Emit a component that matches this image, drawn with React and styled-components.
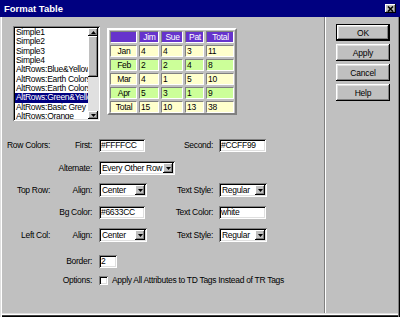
import React from "react";
import styled, { createGlobalStyle } from "styled-components";

const FONT = `"Liberation Sans", Arial, sans-serif`;

const Global = createGlobalStyle`
  html, body { margin: 0; padding: 0; background: #c0c0c0; }
  body { width: 400px; height: 317px; overflow: hidden; }
  * { box-sizing: border-box; }
`;

const Window = styled.div`
  width: 400px;
  height: 317px;
  background: #c0c0c0;
  display: flex;
  flex-direction: column;
  font: 8.5px ${FONT};
  letter-spacing: -0.3px;
  color: #000;
`;

const TitleBar = styled.div`
  flex: none;
  height: 17px;
  background: #000080;
  display: flex;
  align-items: center;
  justify-content: space-between;
  padding: 0 4px;
`;

const Title = styled.span`
  color: #fff;
  font: bold 9.5px ${FONT};
  letter-spacing: 0;
`;

const CloseBtn = styled.div`
  width: 11px;
  height: 9px;
  background: #c0c0c0;
  display: flex;
  align-items: center;
  justify-content: center;
  box-shadow: inset -1px -1px #000, inset 1px 1px #fff, inset -2px -2px #808080;
`;

const Body = styled.div`
  flex: 1;
  display: flex;
  padding: 0 2px 4px 2px;
  box-shadow: inset 1px 0 #dfdfdf, inset 2px 0 #fff, inset -1px 0 #000,
    inset -2px 0 #808080, inset 0 -1px #000, inset 0 -2px #404040,
    inset 0 -3px #fff, inset 0 -4px #dfdfdf;
`;

const LeftPanel = styled.div`
  width: 323px;
  border-right: 1px solid #808080;
  display: flex;
  flex-direction: column;
`;

const RightPanel = styled.div`
  flex: 1;
  border-left: 1px solid #fff;
  padding: 7px 0 0 10px;
  display: flex;
  flex-direction: column;
  gap: 3px;
`;

const Btn = styled.button`
  width: 54px;
  height: 17px;
  padding: 0;
  background: #c0c0c0;
  font: 8.5px ${FONT};
  letter-spacing: -0.2px;
  color: #000;
  border: ${(p) => (p.$default ? "1px solid #000" : "none")};
  box-shadow: inset -1px -1px #000, inset 1px 1px #fff, inset -2px -2px #808080,
    inset 2px 2px #dfdfdf;
`;

const TopSection = styled.div`
  display: flex;
  align-items: flex-start;
  gap: 7px;
  padding: 9px 0 0 11px;
`;

const ListBox = styled.div`
  width: 87px;
  height: 95px;
  background: #fff;
  padding: 2px;
  display: flex;
  box-shadow: inset 1px 1px #808080, inset -1px -1px #fff, inset 2px 2px #000,
    inset -2px -2px #dfdfdf;
`;

const Items = styled.div`
  flex: 1;
  overflow: hidden;
`;

const Item = styled.div`
  height: 9.33px;
  line-height: 9.33px;
  padding-left: 1px;
  white-space: nowrap;
  overflow: hidden;
  text-overflow: clip;
  background: ${(p) => (p.$sel ? "#000080" : "transparent")};
  color: ${(p) => (p.$sel ? "#fff" : "#000")};
`;

const ScrollBar = styled.div`
  width: 10px;
  flex: none;
  display: flex;
  flex-direction: column;
  background: #e0e0e0;
`;

const Raised = styled.div`
  flex: none;
  height: ${(p) => p.$h}px;
  background: #c0c0c0;
  display: flex;
  align-items: center;
  justify-content: center;
  box-shadow: inset -1px -1px #000, inset 1px 1px #fff, inset -2px -2px #808080;
`;

const Track = styled.div`
  flex: 1;
`;

const Preview = styled.div`
  margin-top: 2px;
  display: grid;
  grid-template-columns: 27px 20px 22px 19px 28px;
  grid-auto-rows: 12px;
  gap: 2px;
  padding: 1px 1px 0 1px;
  border: 2px solid;
  border-color: #fff #808080 #808080 #fff;
`;

const Cell = styled.div`
  border: 1px solid;
  border-color: #808080 #fff #fff #808080;
  background: ${(p) => p.$bg};
  color: ${(p) => (p.$head ? "#fff" : "#000")};
  text-align: ${(p) => (p.$center ? "center" : "left")};
  padding-left: 1px;
  line-height: 10px;
  white-space: nowrap;
  overflow: hidden;
`;

const Form = styled.div`
  display: flex;
  flex-direction: column;
`;

const Row = styled.div`
  display: grid;
  grid-template-columns: 48px 49px 76px 44px 60px;
  align-items: center;
  height: 14px;
  margin-top: ${(p) => p.$mt}px;
`;

const Label = styled.span`
  text-align: right;
  padding-right: ${(p) => p.$pr || 0}px;
  white-space: nowrap;
  grid-column: ${(p) => p.$col};
`;

const TextBox = styled.div`
  grid-column: ${(p) => p.$col};
  width: ${(p) => p.$w}px;
  height: 13px;
  background: #fff;
  padding: 0 2px;
  line-height: 12px;
  white-space: nowrap;
  overflow: hidden;
  box-shadow: inset 1px 1px #808080, inset -1px -1px #fff, inset 2px 2px #000,
    inset -2px -2px #dfdfdf;
`;

const Select = styled.div`
  grid-column: ${(p) => p.$col};
  width: ${(p) => p.$w}px;
  height: 14px;
  background: #fff;
  display: flex;
  align-items: center;
  padding: 2px 2px 2px 3px;
  box-shadow: inset 1px 1px #808080, inset -1px -1px #fff, inset 2px 2px #000,
    inset -2px -2px #dfdfdf;
`;

const SelectText = styled.span`
  flex: 1;
  white-space: nowrap;
  overflow: hidden;
`;

const ArrowBox = styled.div`
  flex: none;
  width: 10px;
  height: 10px;
  background: #c0c0c0;
  display: flex;
  align-items: center;
  justify-content: center;
  box-shadow: inset -1px -1px #000, inset 1px 1px #fff, inset -2px -2px #808080;
`;

const OptionWrap = styled.div`
  grid-column: 3 / -1;
  display: flex;
  align-items: center;
  gap: 4px;
  white-space: nowrap;
`;

const CheckBox = styled.div`
  flex: none;
  width: 9px;
  height: 9px;
  background: #fff;
  box-shadow: inset 1px 1px #808080, inset -1px -1px #fff, inset 2px 2px #000,
    inset -2px -2px #dfdfdf;
`;

const Down = () => (
  <svg width="5" height="3" viewBox="0 0 5 3">
    <path d="M0 0H5L2.5 3Z" fill="#000" />
  </svg>
);
const Up = () => (
  <svg width="5" height="3" viewBox="0 0 5 3">
    <path d="M0 3H5L2.5 0Z" fill="#000" />
  </svg>
);

const Dropdown = ({ col, w, value }) => (
  <Select $col={col} $w={w}>
    <SelectText>{value}</SelectText>
    <ArrowBox>
      <Down />
    </ArrowBox>
  </Select>
);

const styles = [
  "Simple1",
  "Simple2",
  "Simple3",
  "Simple4",
  "AltRows:Blue&Yellow",
  "AltRows:Earth Colors",
  "AltRows:Earth Colors 2",
  "AltRows:Green&Yellow",
  "AltRows:Basic Grey",
  "AltRows:Orange",
];

const PURPLE = "#6633CC";
const Y = "#FFFFCC";
const G = "#CCFF99";

const data = [
  ["Jan", "4", "4", "3", "11", Y],
  ["Feb", "2", "2", "4", "8", G],
  ["Mar", "4", "1", "5", "10", Y],
  ["Apr", "5", "3", "1", "9", G],
  ["Total", "15", "10", "13", "38", Y],
];

export default function App() {
  return (
    <>
      <Global />
      <Window>
        <TitleBar>
          <Title>Format Table</Title>
          <CloseBtn>
            <svg width="7" height="6" viewBox="0 0 7 6">
              <path d="M1 0.5L6 5.5M6 0.5L1 5.5" stroke="#000" strokeWidth="1.6" />
            </svg>
          </CloseBtn>
        </TitleBar>
        <Body>
          <LeftPanel>
            <TopSection>
              <ListBox>
                <Items>
                  {styles.map((s, i) => (
                    <Item key={s} $sel={i === 7}>
                      {s}
                    </Item>
                  ))}
                </Items>
                <ScrollBar>
                  <Raised $h={8}>
                    <Up />
                  </Raised>
                  <Raised $h={41} />
                  <Track />
                  <Raised $h={8}>
                    <Down />
                  </Raised>
                </ScrollBar>
              </ListBox>
              <Preview>
                <Cell $bg={PURPLE} $head />
                {["Jim", "Sue", "Pat", "Total"].map((h) => (
                  <Cell key={h} $bg={PURPLE} $head $center>
                    {h}
                  </Cell>
                ))}
                {data.map((r) => (
                  <React.Fragment key={r[0]}>
                    <Cell $bg={r[5]} $center>
                      {r[0]}
                    </Cell>
                    {r.slice(1, 5).map((v, j) => (
                      <Cell key={j} $bg={r[5]}>
                        {v}
                      </Cell>
                    ))}
                  </React.Fragment>
                ))}
              </Preview>
            </TopSection>
            <Form>
              <Row $mt={17}>
                <Label $col={1}>Row Colors:</Label>
                <Label $col={2} $pr={7}>First:</Label>
                <TextBox $col={3} $w={46}>#FFFFCC</TextBox>
                <Label $col={4} $pr={6}>Second:</Label>
                <TextBox $col={5} $w={47}>#CCFF99</TextBox>
              </Row>
              <Row $mt={9}>
                <Label $col={2} $pr={7}>Alternate:</Label>
                <Dropdown col="3 / span 2" w={76} value="Every Other Row" />
              </Row>
              <Row $mt={8}>
                <Label $col={1}>Top Row:</Label>
                <Label $col={2} $pr={7}>Align:</Label>
                <Dropdown col={3} w={48} value="Center" />
                <Label $col={4} $pr={6}>Text Style:</Label>
                <Dropdown col={5} w={48} value="Regular" />
              </Row>
              <Row $mt={8}>
                <Label $col={2} $pr={7}>Bg Color:</Label>
                <TextBox $col={3} $w={46}>#6633CC</TextBox>
                <Label $col={4} $pr={6}>Text Color:</Label>
                <TextBox $col={5} $w={47}>white</TextBox>
              </Row>
              <Row $mt={9}>
                <Label $col={1}>Left Col:</Label>
                <Label $col={2} $pr={7}>Align:</Label>
                <Dropdown col={3} w={48} value="Center" />
                <Label $col={4} $pr={6}>Text Style:</Label>
                <Dropdown col={5} w={48} value="Regular" />
              </Row>
              <Row $mt={12}>
                <Label $col={2} $pr={7}>Border:</Label>
                <TextBox $col={3} $w={18}>2</TextBox>
              </Row>
              <Row $mt={5}>
                <Label $col={2} $pr={7}>Options:</Label>
                <OptionWrap>
                  <CheckBox />
                  <span>Apply All Attributes to TD Tags Instead of TR Tags</span>
                </OptionWrap>
              </Row>
            </Form>
          </LeftPanel>
          <RightPanel>
            <Btn $default>OK</Btn>
            <Btn>Apply</Btn>
            <Btn>Cancel</Btn>
            <Btn>Help</Btn>
          </RightPanel>
        </Body>
      </Window>
    </>
  );
}
